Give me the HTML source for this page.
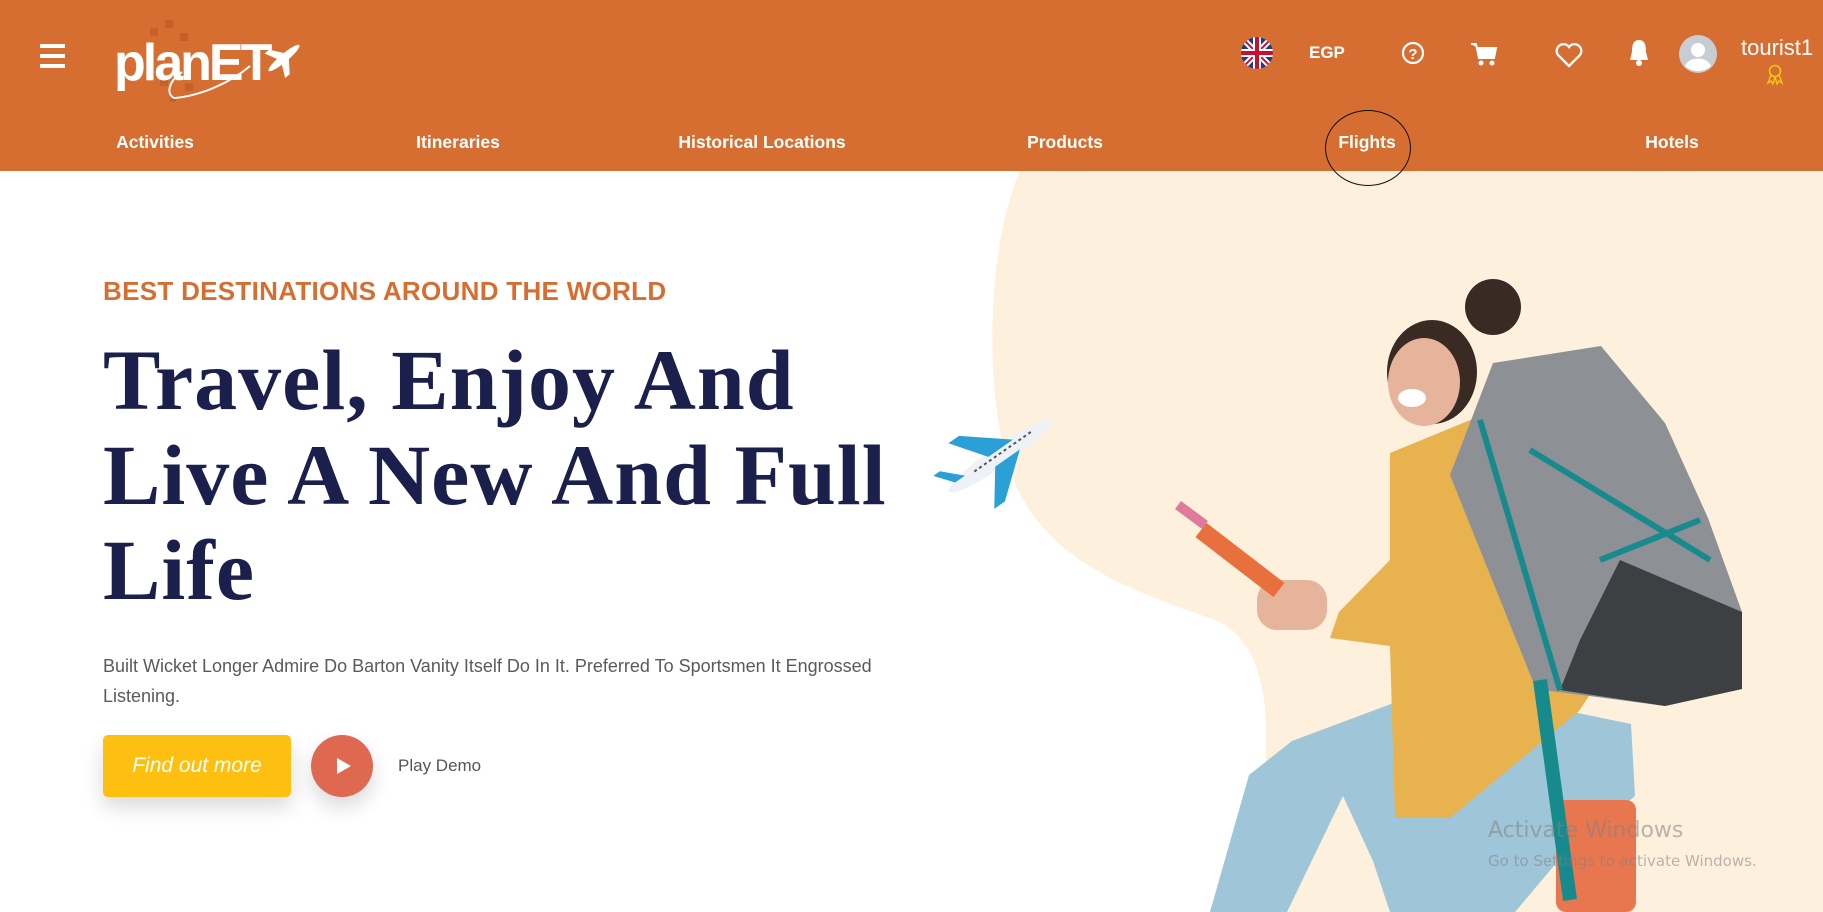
<!DOCTYPE html>
<html><head><meta charset="utf-8"><style>
*{margin:0;padding:0;box-sizing:border-box}
body{width:1823px;height:912px;overflow:hidden;background:#fff;font-family:"Liberation Sans",sans-serif;position:relative}
.hdr{position:absolute;left:0;top:0;width:1823px;height:171px;background:#d76e31}
.nav{position:absolute;top:132px;color:#fff;font-weight:bold;font-size:17.5px;transform:translateX(-50%);white-space:nowrap}
.abs{position:absolute}
h1{position:absolute;left:103px;top:333px;font-family:"Liberation Serif",serif;font-weight:bold;font-size:86px;line-height:95px;color:#1b1f4b;letter-spacing:1px;white-space:nowrap}
</style></head><body>
<svg class="abs" style="left:0;top:0" width="1823" height="912">
<path d="M1020,171 C985,250 985,400 1010,470 C1040,560 1130,590 1215,620 C1262,640 1268,700 1266,760 L1266,912 L1823,912 L1823,171 Z" fill="#fdf0dc"/>
<polygon points="1442,685 1631,724 1635,796 1558,861 1515,912 1390,912 1373,861 1343,796 1287,912 1210,912 1249,775 1292,741" fill="#9fc5d9"/>
<rect x="1556" y="800" width="80" height="112" rx="10" fill="#e8774f"/>
<polygon points="1390,453 1485,414 1536,518 1622,646 1579,711 1450,818 1395,818 1390,646 1330,638 1339,612 1390,560" fill="#e8b24e"/>
<polygon points="1493,363 1601,346 1665,423 1708,518 1742,612 1742,689 1665,706 1536,689 1450,475" fill="#8d9094"/>
<polygon points="1620,560 1742,612 1742,689 1665,706 1560,690 1580,640" fill="#3d4043"/>
<path d="M1480,420 L1560,690 M1530,450 L1710,560 M1600,560 L1700,520" stroke="#178a8e" stroke-width="6" fill="none"/>
<path d="M1540,680 L1570,900" stroke="#178a8e" stroke-width="14"/>
<circle cx="1493" cy="307" r="28" fill="#3a2a24"/>
<ellipse cx="1432" cy="372" rx="45" ry="52" fill="#3a2a24"/>
<ellipse cx="1424" cy="382" rx="36" ry="44" fill="#e6b49a"/>
<ellipse cx="1412" cy="398" rx="14" ry="9" fill="#fff"/>
<rect x="1257" y="580" width="70" height="50" rx="20" fill="#e6b49a"/>
<line x1="1201" y1="530" x2="1279" y2="590" stroke="#e7703c" stroke-width="18"/>
<line x1="1178" y1="505" x2="1205" y2="525" stroke="#e07a9a" stroke-width="10"/>
<g transform="translate(1000,456) rotate(-35)">
<ellipse cx="0" cy="0" rx="62" ry="10" fill="#eef2f6"/>
<polygon points="-10,-6 -35,-40 -22,-40 20,-6" fill="#2aa0d6"/>
<polygon points="-10,6 -35,40 -22,40 20,6" fill="#2aa0d6"/>
<polygon points="-52,-4 -66,-22 -58,-22 -40,-4" fill="#2aa0d6"/>
<line x1="-30" y1="-2" x2="40" y2="-2" stroke="#555" stroke-width="2" stroke-dasharray="3 3"/>
</g>
</svg>
<div class="hdr"></div>
<div class="abs" style="left:40px;top:44px;width:25px;height:4px;background:#fff"></div>
<div class="abs" style="left:40px;top:54px;width:25px;height:4px;background:#fff"></div>
<div class="abs" style="left:40px;top:64px;width:25px;height:4px;background:#fff"></div>
<svg class="abs" style="left:110px;top:8px" width="200" height="105">
<g fill="#c65f28"><rect x="40" y="20" width="8" height="8"/><rect x="55" y="12" width="8" height="8"/><rect x="70" y="25" width="8" height="8"/><rect x="50" y="70" width="8" height="8"/><rect x="75" y="75" width="8" height="8"/><rect x="60" y="88" width="6" height="6"/></g>
<text x="4" y="72" font-family="Liberation Sans" font-weight="bold" font-size="52" fill="#fff" letter-spacing="-3">planET</text>
<path d="M64,90 C90,88 120,75 140,58" stroke="#fff" stroke-width="2" fill="none"/>
<path d="M64,90 C55,85 60,72 72,64" stroke="#fff" stroke-width="2" fill="none"/>
<g transform="translate(174,50) rotate(-40)" fill="#fff"><ellipse cx="0" cy="0" rx="20" ry="4"/><polygon points="-4,0 -12,-16 -6,-16 6,0"/><polygon points="-4,0 -12,16 -6,16 6,0"/></g>
</svg>
<svg class="abs" style="left:1240px;top:36px" width="34" height="34" viewBox="0 0 34 34"><defs><clipPath id="c"><circle cx="17" cy="17" r="16"/></clipPath></defs><g clip-path="url(#c)"><rect width="34" height="34" fill="#1f3a8a"/><path d="M0,0 L34,34 M34,0 L0,34" stroke="#fff" stroke-width="6"/><path d="M0,0 L34,34 M34,0 L0,34" stroke="#c8102e" stroke-width="2"/><path d="M17,0 V34 M0,17 H34" stroke="#fff" stroke-width="8"/><path d="M17,0 V34 M0,17 H34" stroke="#c8102e" stroke-width="4"/></g></svg>
<div class="abs" style="left:1309px;top:43px;color:#fff;font-weight:bold;font-size:17px">EGP</div>
<svg class="abs" style="left:1401px;top:41px" width="24" height="24"><circle cx="12" cy="12" r="10" stroke="#fff" stroke-width="2.2" fill="none"/><text x="12" y="18" text-anchor="middle" font-size="15" font-weight="bold" fill="#fff" font-family="Liberation Sans">?</text></svg>
<svg class="abs" style="left:1470px;top:42px" width="28" height="24"><path d="M1,2 H6 L9,16 H24 L26,6 H8" fill="#fff" stroke="#fff" stroke-width="2"/><circle cx="11" cy="21" r="2.5" fill="#fff"/><circle cx="22" cy="21" r="2.5" fill="#fff"/></svg>
<svg class="abs" style="left:1555px;top:42px" width="28" height="26"><path d="M14,24 L3,13 A6,6 0 0 1 14,5 A6,6 0 0 1 25,13 Z" stroke="#fff" stroke-width="2.3" fill="none"/></svg>
<svg class="abs" style="left:1627px;top:38px" width="24" height="30"><path d="M12,2 C5,2 5,10 5,14 L3,22 H21 L19,14 C19,10 19,2 12,2Z" fill="#fff"/><circle cx="12" cy="25" r="3" fill="#fff"/></svg>
<svg class="abs" style="left:1679px;top:35px" width="38" height="38"><circle cx="19" cy="19" r="19" fill="#c8ccd3"/><circle cx="19" cy="15" r="7" fill="#fff"/><path d="M6,31 C10,21 28,21 32,31 A19,19 0 0 1 6,31Z" fill="#fff"/></svg>
<div class="abs" style="left:1741px;top:35px;color:#fff;font-size:22px">tourist1</div>
<svg class="abs" style="left:1765px;top:64px" width="20" height="22"><circle cx="10" cy="7" r="5.5" stroke="#f5c518" stroke-width="1.6" fill="none"/><path d="M6,11 L3,19 L6,17 L8,20 L10,13 M14,11 L17,19 L14,17 L12,20 L10,13" stroke="#f5c518" stroke-width="1.4" fill="none"/></svg>
<div class="nav" style="left:155px">Activities</div>
<div class="nav" style="left:458px">Itineraries</div>
<div class="nav" style="left:762px">Historical Locations</div>
<div class="nav" style="left:1065px">Products</div>
<div class="nav" style="left:1367px">Flights</div>
<div class="nav" style="left:1672px">Hotels</div>
<div class="abs" style="left:1325px;top:110px;width:86px;height:76px;border:1.5px solid #111;border-radius:50%"></div>
<div class="abs" style="left:103px;top:276px;color:#d76e31;font-weight:bold;font-size:26px;letter-spacing:0.3px">BEST DESTINATIONS AROUND THE WORLD</div>
<h1>Travel, Enjoy And<br>Live A New And Full<br>Life</h1>
<div class="abs" style="left:103px;top:651px;width:820px;color:#5a5a5a;font-size:18px;line-height:30px">Built Wicket Longer Admire Do Barton Vanity Itself Do In It. Preferred To Sportsmen It Engrossed Listening.</div>
<div class="abs" style="left:103px;top:735px;width:188px;height:62px;background:#fdc010;border-radius:5px;box-shadow:0 10px 20px rgba(0,0,0,0.15);color:#fff;font-style:italic;font-size:21px;line-height:62px;text-align:center">Find out more</div>
<div class="abs" style="left:311px;top:735px;width:62px;height:62px;border-radius:50%;background:#df6950;box-shadow:0 10px 20px rgba(0,0,0,0.15)"></div>
<svg class="abs" style="left:335px;top:757px" width="18" height="18"><polygon points="2,1 16,9 2,17" fill="#fff"/></svg>
<div class="abs" style="left:398px;top:756px;color:#555;font-size:17px">Play Demo</div>
<div class="abs" style="left:1488px;top:818px;color:rgba(130,130,130,0.55);font-family:'DejaVu Sans',sans-serif;font-size:22px">Activate Windows</div>
<div class="abs" style="left:1488px;top:852px;color:rgba(130,130,130,0.55);font-family:'DejaVu Sans',sans-serif;font-size:15px">Go to Settings to activate Windows.</div>
</body></html>
